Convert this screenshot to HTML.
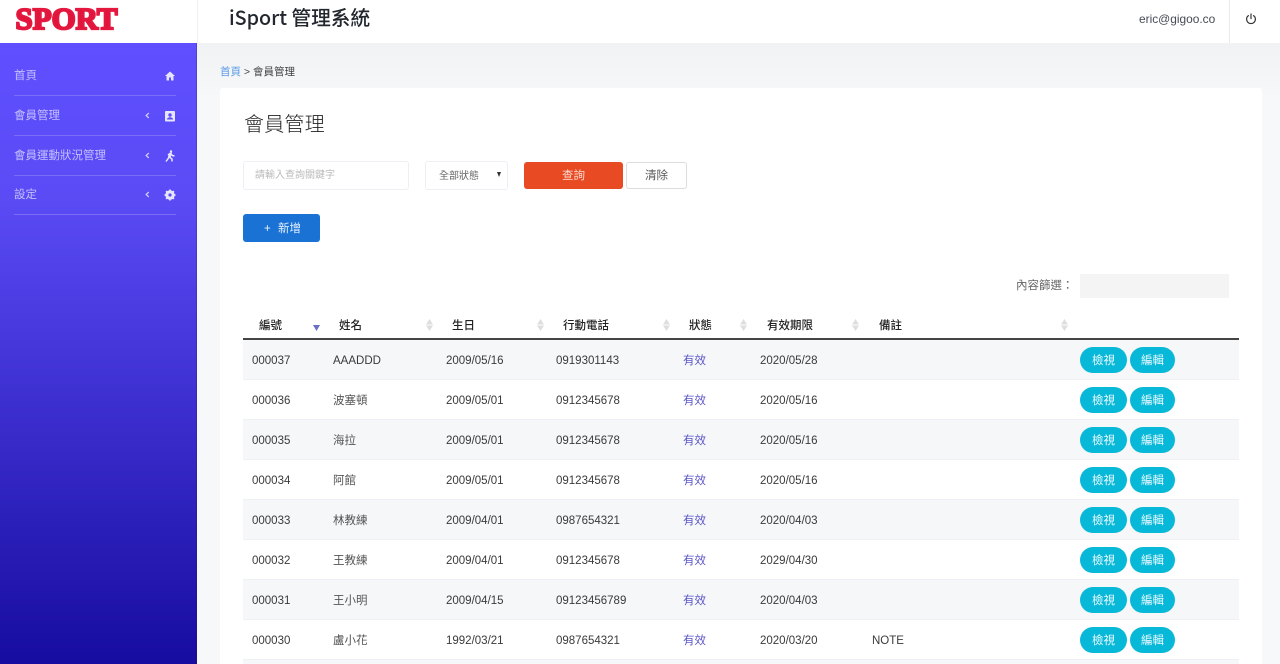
<!DOCTYPE html>
<html lang="zh-Hant"><head><meta charset="utf-8"><title>iSport 管理系統</title>
<style>
*{box-sizing:border-box}
html,body{margin:0;width:1280px;height:664px;overflow:hidden}
body{position:relative;background:linear-gradient(#f0f2f4 43px,#f6f8fa 100px);font-family:"Liberation Sans","Noto Sans CJK TC",sans-serif;font-size:11.5px;color:#333}
.a{position:absolute;white-space:nowrap}
#side{left:0;top:43px;width:197px;height:621px;background:linear-gradient(#5f4fff,#5a4bf5 25%,#170ca0);border-right:1px solid rgba(30,20,100,.25)}
.m{left:14px;color:#c5c0ff;font-size:11.5px;line-height:16px}
.ln{left:14px;width:162px;height:1px;background:#7a6ef9}
.row{left:243px;width:996px;height:40px;border-bottom:1px solid #edf0f4}
.row.o{background:#f5f7f9}
.c{position:absolute;top:2px;line-height:39px;white-space:nowrap;color:#3a3a3a;font-size:11.5px}
.n{color:#555}
.s{color:#5a55c8}
.b{position:absolute;top:7px;height:26px;border-radius:13px;background:#07b8d8;color:#eafaff;text-align:center;line-height:28px;font-size:11.5px}
.th{top:318px;font-size:11.5px;line-height:16px;color:#222;font-weight:500}
.sort{position:absolute;top:319px;width:7px;height:12px}
</style></head><body>
<div class="a" style="left:0;top:0;width:197px;height:43px;background:#fff"></div>
<svg class="a" style="left:14px;top:6px" width="106" height="26" viewBox="0 0 106 26"><text x="1.500" y="23" textLength="102" lengthAdjust="spacingAndGlyphs" font-family="Liberation Serif" font-weight="700" font-size="31" fill="#e0143c" stroke="#e4183f" stroke-width="2.200">SPORT</text></svg>
<div class="a" style="left:197px;top:0;width:1083px;height:43px;background:#fff;border-left:1px solid #eef0f6"></div>
<div class="a" style="left:229px;top:4px;font-family:'Noto Sans CJK TC',sans-serif;font-size:19.700px;line-height:26px;font-weight:500;color:#22272e">iSport 管理系統</div>
<div class="a" style="left:1139px;top:11px;font-size:11.900px;line-height:16px;color:#444b55">eric@gigoo.co</div>
<div class="a" style="left:1229px;top:0;width:1px;height:43px;background:#e9ebef"></div>
<svg class="a" style="left:1245px;top:13px" width="12" height="12" viewBox="0 0 12 12" fill="none" stroke="#333" stroke-width="1.200" stroke-linecap="round"><path d="M3.400 2.600a4.400 4.400 0 1 0 5.200 0M6 1v4.600"/></svg>

<div class="a" id="side"></div>
<div class="a m" style="top:68px">首頁</div>
<svg class="a" style="left:165px;top:71px" width="10" height="10" viewBox="0 0 10 10" fill="#e6e4ff"><path d="M5 .5 0 5h1.500v4.500h2.500V6.500h2v3h2.500V5H10z"/></svg>
<div class="a ln" style="top:95px"></div>
<div class="a m" style="top:108px">會員管理</div>
<svg class="a" style="left:145px;top:112px" width="5" height="7" viewBox="0 0 5 7" fill="none" stroke="#dcd9ff" stroke-width="1.200"><path d="M3.800 1 1.200 3.500l2.600 2.500"/></svg>
<svg class="a" style="left:165px;top:111px" width="10" height="11" viewBox="0 0 10 11"><rect width="10" height="10.500" rx="1" fill="#e6e4ff"/><circle cx="5" cy="4" r="1.700" fill="#5b4cf5"/><path d="M2 8.500c0-3 6-3 6 0z" fill="#5b4cf5"/></svg>
<div class="a ln" style="top:135px"></div>
<div class="a m" style="top:148px">會員運動狀況管理</div>
<svg class="a" style="left:145px;top:152px" width="5" height="7" viewBox="0 0 5 7" fill="none" stroke="#dcd9ff" stroke-width="1.200"><path d="M3.800 1 1.200 3.500l2.600 2.500"/></svg>
<svg class="a" style="left:165px;top:150px" width="10" height="12" viewBox="0 0 10 12" fill="none" stroke="#e6e4ff" stroke-width="1.500"><circle cx="6" cy="1.500" r="1.200" fill="#e6e4ff" stroke="none"/><path d="M1 11.500 3.500 8 4.500 4 6 3.500l-1 4 2 1.500v2.500M3 5l2-1.500L7.500 5.500 9.500 6"/></svg>
<div class="a ln" style="top:175px"></div>
<div class="a m" style="top:187px">設定</div>
<svg class="a" style="left:145px;top:191px" width="5" height="7" viewBox="0 0 5 7" fill="none" stroke="#dcd9ff" stroke-width="1.200"><path d="M3.800 1 1.200 3.500l2.600 2.500"/></svg>
<svg class="a" style="left:164px;top:189px" width="12" height="12" viewBox="0 0 12 12"><circle cx="6" cy="6" r="3.500" fill="none" stroke="#e6e4ff" stroke-width="2.400"/><path d="M6 .5v11M.5 6h11M2.100 2.100l7.800 7.800M9.900 2.100l-7.800 7.800" stroke="#e6e4ff" stroke-width="1.700"/><circle cx="6" cy="6" r="1.600" fill="#5b4cf5"/></svg>
<div class="a ln" style="top:214px"></div>

<div class="a" style="left:220px;top:64px;line-height:16px;font-size:10.500px;color:#444"><span style="color:#5a9be6">首頁</span> &gt; 會員管理</div>
<div class="a" style="left:220px;top:88px;width:1042px;height:576px;background:#fff;border-radius:3px 3px 0 0"></div>
<div class="a" style="left:244px;top:111px;font-size:20px;line-height:29px;color:#222;letter-spacing:.2px;font-weight:300">會員管理</div>

<div class="a" style="left:243px;top:161px;width:166px;height:29px;border:1px solid #eceff3;border-radius:3px;padding-left:11px;line-height:28px;font-size:10px;color:#bbb">請輸入查詢關鍵字</div>
<div class="a" style="left:425px;top:161px;width:83px;height:29px;border:1px solid #eceff3;border-radius:3px;padding-left:13px;line-height:30px;font-size:10px;color:#666">全部狀態</div>
<div class="a" style="left:497px;top:172px;width:0;height:0;border-left:2.500px solid transparent;border-right:2.500px solid transparent;border-top:5px solid #333"></div>
<div class="a" style="left:524px;top:162px;width:99px;height:27px;background:#e84a23;border-radius:3px;color:#fbd9cd;text-align:center;line-height:28px">查詢</div>
<div class="a" style="left:626px;top:162px;width:61px;height:27px;border:1px solid #dcdcdc;border-radius:3px;text-align:center;line-height:26px;color:#555">清除</div>
<div class="a" style="left:243px;top:214px;width:77px;height:28px;background:#1a73d4;border-radius:3px"></div>
<div class="a" style="left:264px;top:222px;line-height:15px;color:#e8f2ff;font-size:11.500px"><span style="display:inline-block;width:14px">+</span>新增</div>

<div class="a" style="left:1016px;top:278px;line-height:16px;color:#666">內容篩選：</div>
<div class="a" style="left:1080px;top:274px;width:149px;height:24px;background:#f4f4f4"></div>

<div class="a th" style="left:259px">編號</div>
<div class="a th" style="left:339px">姓名</div>
<div class="a th" style="left:452px">生日</div>
<div class="a th" style="left:563px">行動電話</div>
<div class="a th" style="left:689px">狀態</div>
<div class="a th" style="left:767px">有效期限</div>
<div class="a th" style="left:879px">備註</div>
<svg class="sort" style="left:313px" viewBox="0 0 7 12"><path d="M0 6h7L3.500 12z" fill="#6a70c8"/></svg>
<svg class="sort" style="left:426px" viewBox="0 0 7 12" fill="#dedede"><path d="M3.500 0 7 5.500H0zM0 6.500h7L3.500 12z"/></svg>
<svg class="sort" style="left:537px" viewBox="0 0 7 12" fill="#dedede"><path d="M3.500 0 7 5.500H0zM0 6.500h7L3.500 12z"/></svg>
<svg class="sort" style="left:663px" viewBox="0 0 7 12" fill="#dedede"><path d="M3.500 0 7 5.500H0zM0 6.500h7L3.500 12z"/></svg>
<svg class="sort" style="left:740px" viewBox="0 0 7 12" fill="#dedede"><path d="M3.500 0 7 5.500H0zM0 6.500h7L3.500 12z"/></svg>
<svg class="sort" style="left:852px" viewBox="0 0 7 12" fill="#dedede"><path d="M3.500 0 7 5.500H0zM0 6.500h7L3.500 12z"/></svg>
<svg class="sort" style="left:1061px" viewBox="0 0 7 12" fill="#dedede"><path d="M3.500 0 7 5.500H0zM0 6.500h7L3.500 12z"/></svg>
<div class="a" style="left:243px;top:338px;width:996px;height:2px;background:#444"></div>

<div class="a row o" style="top:340px"><span class="c" style="left:9px">000037</span><span class="c" style="left:90px">AAADDD</span><span class="c" style="left:203px">2009/05/16</span><span class="c" style="left:313px">0919301143</span><span class="c s" style="left:440px">有效</span><span class="c" style="left:517px">2020/05/28</span><span class="b" style="left:837px;width:47px">檢視</span><span class="b" style="left:887px;width:45px">編輯</span></div>
<div class="a row" style="top:380px"><span class="c" style="left:9px">000036</span><span class="c n" style="left:90px">波塞頓</span><span class="c" style="left:203px">2009/05/01</span><span class="c" style="left:313px">0912345678</span><span class="c s" style="left:440px">有效</span><span class="c" style="left:517px">2020/05/16</span><span class="b" style="left:837px;width:47px">檢視</span><span class="b" style="left:887px;width:45px">編輯</span></div>
<div class="a row o" style="top:420px"><span class="c" style="left:9px">000035</span><span class="c n" style="left:90px">海拉</span><span class="c" style="left:203px">2009/05/01</span><span class="c" style="left:313px">0912345678</span><span class="c s" style="left:440px">有效</span><span class="c" style="left:517px">2020/05/16</span><span class="b" style="left:837px;width:47px">檢視</span><span class="b" style="left:887px;width:45px">編輯</span></div>
<div class="a row" style="top:460px"><span class="c" style="left:9px">000034</span><span class="c n" style="left:90px">阿館</span><span class="c" style="left:203px">2009/05/01</span><span class="c" style="left:313px">0912345678</span><span class="c s" style="left:440px">有效</span><span class="c" style="left:517px">2020/05/16</span><span class="b" style="left:837px;width:47px">檢視</span><span class="b" style="left:887px;width:45px">編輯</span></div>
<div class="a row o" style="top:500px"><span class="c" style="left:9px">000033</span><span class="c n" style="left:90px">林教練</span><span class="c" style="left:203px">2009/04/01</span><span class="c" style="left:313px">0987654321</span><span class="c s" style="left:440px">有效</span><span class="c" style="left:517px">2020/04/03</span><span class="b" style="left:837px;width:47px">檢視</span><span class="b" style="left:887px;width:45px">編輯</span></div>
<div class="a row" style="top:540px"><span class="c" style="left:9px">000032</span><span class="c n" style="left:90px">王教練</span><span class="c" style="left:203px">2009/04/01</span><span class="c" style="left:313px">0912345678</span><span class="c s" style="left:440px">有效</span><span class="c" style="left:517px">2029/04/30</span><span class="b" style="left:837px;width:47px">檢視</span><span class="b" style="left:887px;width:45px">編輯</span></div>
<div class="a row o" style="top:580px"><span class="c" style="left:9px">000031</span><span class="c n" style="left:90px">王小明</span><span class="c" style="left:203px">2009/04/15</span><span class="c" style="left:313px">09123456789</span><span class="c s" style="left:440px">有效</span><span class="c" style="left:517px">2020/04/03</span><span class="b" style="left:837px;width:47px">檢視</span><span class="b" style="left:887px;width:45px">編輯</span></div>
<div class="a row" style="top:620px"><span class="c" style="left:9px">000030</span><span class="c n" style="left:90px">盧小花</span><span class="c" style="left:203px">1992/03/21</span><span class="c" style="left:313px">0987654321</span><span class="c s" style="left:440px">有效</span><span class="c" style="left:517px">2020/03/20</span><span class="c" style="left:629px">NOTE</span><span class="b" style="left:837px;width:47px">檢視</span><span class="b" style="left:887px;width:45px">編輯</span></div>
<div class="a" style="left:243px;top:660px;width:996px;height:4px;background:#f5f7f9"></div>
</body></html>
